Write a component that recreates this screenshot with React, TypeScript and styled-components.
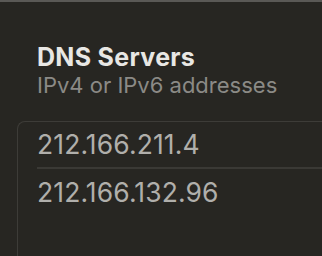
import React from "react";
import styled, { createGlobalStyle } from "styled-components";

const Global = createGlobalStyle`
  html, body { margin: 0; padding: 0; background: #272622; }
  body { font-family: Inter, "Noto Sans", sans-serif; -webkit-font-smoothing: antialiased; }
`;

const Page = styled.div`
  width: 322px;
  height: 256px;
  overflow: hidden;
  background: #272622;
  border-top: 2px solid #5a5956;
  box-sizing: border-box;
  display: flex;
  flex-direction: column;
`;

const Header = styled.div`
  display: flex;
  flex-direction: column;
  padding: 41px 0 0 37px;
`;

const Title = styled.div`
  color: #e8e7e4;
  font-size: 25px;
  font-weight: 700;
  line-height: 28px;
  letter-spacing: 0.3px;
`;

const Subtitle = styled.div`
  color: #8b8a86;
  font-size: 22px;
  line-height: 28px;
`;

const ListBox = styled.div`
  margin: 22px 0 0 17px;
  flex: 1;
  border: 1px solid #3d3c38;
  border-right: none;
  border-bottom: none;
  border-radius: 8px 0 0 0;
  padding: 0 0 0 19px;
  display: flex;
  flex-direction: column;
`;

const Row = styled.div<{ $divider?: boolean }>`
  color: #b0afab;
  font-size: 26.5px;
  line-height: 45px;
  letter-spacing: 0.1px;
  height: ${(p) => (p.$divider ? "47px" : "46px")};
  padding-top: ${(p) => (p.$divider ? "0" : "1px")};
  border-bottom: ${(p) => (p.$divider ? "2px solid #3a3935" : "none")};
  box-sizing: border-box;
`;

export default function App() {
  const servers = ["212.166.211.4", "212.166.132.96"];
  return (
    <>
      <Global />
      <Page>
        <Header>
          <Title>DNS Servers</Title>
          <Subtitle>IPv4 or IPv6 addresses</Subtitle>
        </Header>
        <ListBox>
          {servers.map((s, i) => (
            <Row key={s} $divider={i < servers.length - 1}>
              {s}
            </Row>
          ))}
        </ListBox>
      </Page>
    </>
  );
}
